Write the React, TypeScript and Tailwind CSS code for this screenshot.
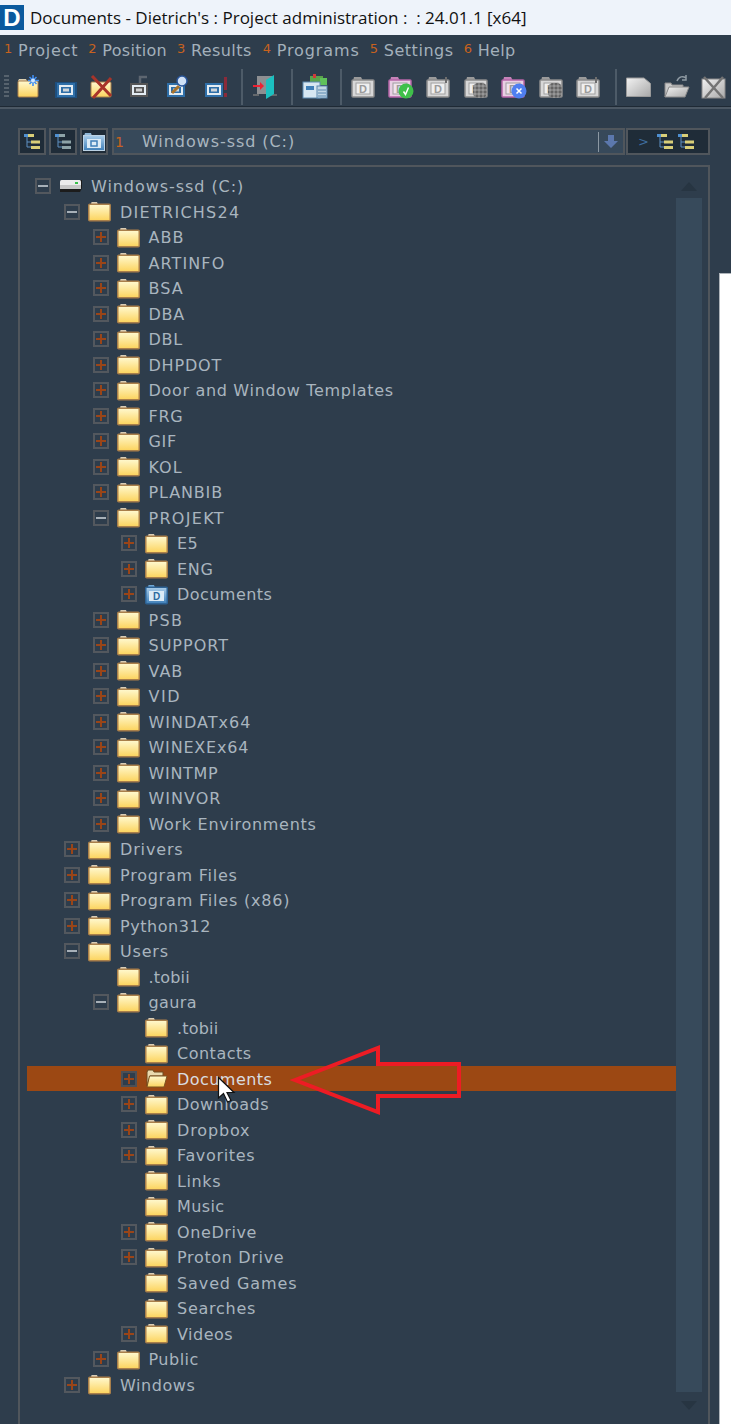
import React from "react";

const font = "[font-family:'DejaVu_Sans',sans-serif]";

type Row = { d: number; t: string; s: string; e?: "+" | "-"; k?: "drive" | "doc" | "open"; sel?: boolean };

const rows: Row[] = [
  { d: 0, t: "Windows-ssd (C:)", s: "tracking-[0.94px]", e: "-", k: "drive" },
  { d: 1, t: "DIETRICHS24", s: "tracking-[1.27px]", e: "-" },
  { d: 2, t: "ABB", s: "tracking-[1px]", e: "+" },
  { d: 2, t: "ARTINFO", s: "tracking-[1.1px]", e: "+" },
  { d: 2, t: "BSA", s: "tracking-[1px]", e: "+" },
  { d: 2, t: "DBA", s: "tracking-[0.7px]", e: "+" },
  { d: 2, t: "DBL", s: "tracking-[0.7px]", e: "+" },
  { d: 2, t: "DHPDOT", s: "tracking-[0.8px]", e: "+" },
  { d: 2, t: "Door and Window Templates", s: "tracking-[0.68px]", e: "+" },
  { d: 2, t: "FRG", s: "tracking-[0.7px]", e: "+" },
  { d: 2, t: "GIF", s: "tracking-[0.7px]", e: "+" },
  { d: 2, t: "KOL", s: "tracking-[1px]", e: "+" },
  { d: 2, t: "PLANBIB", s: "tracking-[0.85px]", e: "+" },
  { d: 2, t: "PROJEKT", s: "tracking-[1.3px]", e: "-" },
  { d: 3, t: "E5", s: "tracking-[0.3px]", e: "+" },
  { d: 3, t: "ENG", s: "tracking-[0.7px]", e: "+" },
  { d: 3, t: "Documents", s: "tracking-[0.45px]", e: "+", k: "doc" },
  { d: 2, t: "PSB", s: "tracking-[1.3px]", e: "+" },
  { d: 2, t: "SUPPORT", s: "tracking-[1px]", e: "+" },
  { d: 2, t: "VAB", s: "tracking-[1px]", e: "+" },
  { d: 2, t: "VID", s: "tracking-[1.5px]", e: "+" },
  { d: 2, t: "WINDATx64", s: "tracking-[1px]", e: "+" },
  { d: 2, t: "WINEXEx64", s: "tracking-[0.8px]", e: "+" },
  { d: 2, t: "WINTMP", s: "tracking-[0.7px]", e: "+" },
  { d: 2, t: "WINVOR", s: "tracking-[1px]", e: "+" },
  { d: 2, t: "Work Environments", s: "tracking-[0.7px]", e: "+" },
  { d: 1, t: "Drivers", s: "tracking-[0.85px]", e: "+" },
  { d: 1, t: "Program Files", s: "tracking-[0.77px]", e: "+" },
  { d: 1, t: "Program Files (x86)", s: "tracking-[0.8px]", e: "+" },
  { d: 1, t: "Python312", s: "tracking-[0.55px]", e: "+" },
  { d: 1, t: "Users", s: "tracking-[0.8px]", e: "-" },
  { d: 2, t: ".tobii", s: "tracking-[0.2px]" },
  { d: 2, t: "gaura", s: "tracking-[0.4px]", e: "-" },
  { d: 3, t: ".tobii", s: "tracking-[0.2px]" },
  { d: 3, t: "Contacts", s: "tracking-[0.5px]" },
  { d: 3, t: "Documents", s: "tracking-[0.45px]", e: "+", k: "open", sel: true },
  { d: 3, t: "Downloads", s: "tracking-[0.45px]", e: "+" },
  { d: 3, t: "Dropbox", s: "tracking-[0.85px]", e: "+" },
  { d: 3, t: "Favorites", s: "tracking-[0.66px]", e: "+" },
  { d: 3, t: "Links", s: "tracking-[0.6px]" },
  { d: 3, t: "Music", s: "tracking-[0.4px]" },
  { d: 3, t: "OneDrive", s: "tracking-[0.6px]", e: "+" },
  { d: 3, t: "Proton Drive", s: "tracking-[0.67px]", e: "+" },
  { d: 3, t: "Saved Games", s: "tracking-[0.9px]" },
  { d: 3, t: "Searches", s: "tracking-[0.75px]" },
  { d: 3, t: "Videos", s: "tracking-[0.5px]", e: "+" },
  { d: 2, t: "Public", s: "tracking-[0.5px]", e: "+" },
  { d: 1, t: "Windows", s: "tracking-[0.57px]", e: "+" },
];

const menu = [
  ["1", "Project", "ml-[4px]", "tracking-[0.8px]"],
  ["2", "Position", "ml-[10px]", "tracking-[0.3px]"],
  ["3", "Results", "ml-[10px]", "tracking-[0.4px]"],
  ["4", "Programs", "ml-[11px]", "tracking-[0.9px]"],
  ["5", "Settings", "ml-[10px]", "tracking-[0.55px]"],
  ["6", "Help", "ml-[10px]", "tracking-[0.3px]"],
];

function Gradients() {
  return (
    <svg width="0" height="0" className="absolute">
      <defs>
        <linearGradient id="fy" x1="0" y1="0" x2="0" y2="1">
          <stop offset="0" stopColor="#fff9d0" />
          <stop offset="1" stopColor="#fcd35c" />
        </linearGradient>
        <linearGradient id="fg" x1="0" y1="0" x2="1" y2="1">
          <stop offset="0" stopColor="#f2f2f2" />
          <stop offset="1" stopColor="#a9a9a9" />
        </linearGradient>
        <linearGradient id="fb" x1="0" y1="0" x2="0" y2="1">
          <stop offset="0" stopColor="#a9cdea" />
          <stop offset="1" stopColor="#3f7fb8" />
        </linearGradient>
        <pattern id="noise" width="4" height="4" patternUnits="userSpaceOnUse">
          <rect width="4" height="4" fill="#7d7d7d" />
          <rect width="2" height="2" fill="#5e5e5e" />
          <rect x="2" y="2" width="2" height="2" fill="#949494" />
        </pattern>
      </defs>
    </svg>
  );
}

function Folder() {
  return (
    <svg width="23" height="21" viewBox="0 0 23 21" className="shrink-0">
      <path d="M3 3.5 L3.5 1 H9 L10 3.5Z" fill="#d9cdb6" />
      <rect x="0.75" y="3.25" width="21.5" height="16.5" rx="1" fill="url(#fy)" stroke="#a97f4a" strokeWidth="1.5" />
    </svg>
  );
}

function OpenFolder() {
  return (
    <svg width="23" height="21" viewBox="0 0 23 21" className="shrink-0">
      <path d="M2 18 V4 L3 2 H8 L9 4 H18 V8 H5Z" fill="#e9d9ae" stroke="#6e4a1e" />
      <path d="M4.5 8 H22 L19 19 H2Z" fill="url(#fy)" stroke="#7d5420" />
    </svg>
  );
}

function DocFolder() {
  return (
    <svg width="23" height="21" viewBox="0 0 23 21" className="shrink-0">
      <path d="M3 3.5 L3.5 1 H9 L10 3.5Z" fill="#6fa6d4" />
      <rect x="0.75" y="3.25" width="21.5" height="16.5" rx="1" fill="url(#fb)" stroke="#2d6294" strokeWidth="1.5" />
      <rect x="4" y="7" width="15" height="10" fill="#dcebf6" />
      <text x="11.5" y="15.8" textAnchor="middle" fontSize="10" fontWeight="700" fill="#2d6a9f" fontFamily="Liberation Sans">D</text>
    </svg>
  );
}

function Drive() {
  return (
    <svg width="24" height="14" viewBox="0 0 24 14" className="shrink-0">
      <path d="M3 1 H23 V9 L21 13 H1 V5Z" fill="#1c1c1c" />
      <rect x="1" y="1" width="21" height="6" rx="1.5" fill="#ececec" />
      <rect x="1" y="6" width="21" height="4" fill="#c7c7c7" />
      <rect x="16" y="3" width="3" height="2" fill="#39c04a" />
    </svg>
  );
}

function Expander({ e, sel }: { e: "+" | "-"; sel?: boolean }) {
  return (
    <span className={`relative block h-[16px] w-[16px] shrink-0 border-2 ${sel ? "border-[#4c4f55] bg-[#2e3d4c]" : "border-[#53585e]"}`}>
      <span className={`absolute left-[1px] top-[5px] h-[2px] w-[10px] ${e === "+" ? "bg-[#9a4518]" : "bg-[#a7b0b8]"}`} />
      {e === "+" && <span className="absolute left-[5px] top-[1px] h-[10px] w-[2px] bg-[#9a4518]" />}
    </span>
  );
}

function TreeRow({ r }: { r: Row }) {
  const pad = ["pl-[8px]", "pl-[37px]", "pl-[65.5px]", "pl-[94px]"][r.d];
  return (
    <div className={`flex h-[25.5px] items-center ${pad} ${r.sel ? "bg-[#9c4813]" : ""}`}>
      <span className="flex w-[24px] shrink-0">{r.e && <Expander e={r.e} sel={r.sel} />}</span>
      {r.k === "drive" ? <Drive /> : r.k === "doc" ? <DocFolder /> : r.k === "open" ? <OpenFolder /> : <Folder />}
      <span className={`${r.k === "drive" ? "ml-[8px]" : "ml-[9px]"} whitespace-pre pt-[2px] text-[16px] leading-none ${r.s} ${r.sel ? "text-[#d9dde0]" : "text-[#a9b5bf]"} ${font}`}>
        {r.t}
      </span>
    </div>
  );
}

function TreeGlyph({ dim }: { dim?: boolean }) {
  const y = dim ? "#8ea4a8" : "#d9cf78";
  return (
    <svg width="16" height="16" viewBox="0 0 16 16">
      <path d="M3 3 V13 H7 M3 8 H7" stroke="#5f90c2" strokeWidth="1" fill="none" />
      <rect x="0" y="0" width="4" height="3" fill="#4f8fd0" />
      <rect x="4" y="0" width="6" height="3" fill={y} />
      <rect x="7" y="6.5" width="9" height="3" fill={y} />
      <rect x="7" y="12" width="9" height="3" fill={y} />
    </svg>
  );
}

function Frame({ s = "#cfd4d8", f = "#2f6fa8" }: { s?: string; f?: string }) {
  return (
    <>
      <rect x="3" y="8" width="18" height="14" fill={f} />
      <rect x="5" y="10" width="14" height="10" fill="#e4ecf2" />
      <rect x="7" y="12" width="10" height="6" fill={f} />
      <rect x="9" y="13.5" width="6" height="3" fill={s} />
    </>
  );
}

function GrayD({ pink, noise, badge, flag }: { pink?: boolean; noise?: boolean; badge?: "ok" | "x"; flag?: boolean }) {
  const tab = pink ? "#c583b8" : "#9a9a9a";
  const edge = pink ? "#b766a8" : "#8c8c8c";
  return (
    <svg width="26" height="24" viewBox="0 0 26 24">
      <path d="M2 6 L3 2 H10 L12 6Z" fill={tab} />
      <rect x="1" y="5" width="22" height="17" rx="1" fill={pink ? "#e9cfe4" : "#d8d8d8"} stroke={edge} strokeWidth="1.5" />
      <rect x="5" y="8" width="14" height="11" fill={pink ? "#f0e2ee" : "#efefef"} stroke="#a0a0a0" />
      <text x="12" y="17.5" textAnchor="middle" fontSize="11" fontWeight="700" fill="#9b9b9b" fontFamily="Liberation Sans">D</text>
      {flag && <path d="M20 2 V8" stroke="#6d6d6d" strokeWidth="2" />}
      {noise && <rect x="9" y="8" width="14" height="15" rx="5" fill="url(#noise)" opacity="0.95" />}
      {badge && <circle cx="18" cy="16" r="7.5" fill={badge === "ok" ? "#3fc04a" : "#4f7ff0"} />}
      {badge === "ok" && <path d="M15.5 16.5 L17.5 19.5 L20.5 12.5" stroke="#fff" strokeWidth="1.5" fill="none" />}
      {badge === "x" && <path d="M15.5 13.5 L20.5 18.5 M20.5 13.5 L15.5 18.5" stroke="#fff" strokeWidth="1.5" />}
    </svg>
  );
}

function Sep({ cls }: { cls: string }) {
  return <span className={`block h-[36px] w-[2px] shrink-0 bg-[#4d5b68] ${cls}`} />;
}

function Toolbar() {
  return (
    <div className="flex h-[37px] items-center pb-[2px]">
      <span className="ml-[4px] h-[24px] w-[5px] shrink-0 bg-[repeating-linear-gradient(to_bottom,#56626d_0px,#56626d_2px,transparent_2px,transparent_4px)]" />
      <svg className="ml-[8px] shrink-0" width="24" height="24" viewBox="0 0 24 24">
        <path d="M1 6 L2 4 H9 L10 6Z" fill="#ddd0b0" />
        <rect x="1" y="6" width="20" height="16" rx="1" fill="url(#fy)" stroke="#a97f4a" />
        <path d="M16 0 V11 M11 5.5 H22 M12.5 2 L19.5 9 M19.5 2 L12.5 9" stroke="#3f8df0" strokeWidth="1.6" />
        <circle cx="16" cy="5.5" r="2" fill="#cfe6ff" />
      </svg>
      <svg className="ml-[13px] shrink-0" width="24" height="24" viewBox="0 0 24 24"><rect x="1" y="7" width="22" height="16" fill="#1e4f7e" /><Frame /></svg>
      <svg className="ml-[11px] shrink-0" width="24" height="24" viewBox="0 0 24 24">
        <rect x="2" y="7" width="20" height="15" rx="1" fill="url(#fy)" stroke="#a97f4a" />
        <path d="M3 1 L22 21 M22 3 L4 23" stroke="#a8342a" strokeWidth="3" />
      </svg>
      <svg className="ml-[16px] shrink-0" width="20" height="24" viewBox="2 0 20 24">
        <Frame s="#cfcfcf" f="#555" />
        <path d="M13 8 V2 H20" stroke="#5d6670" strokeWidth="2.5" fill="none" />
      </svg>
      <svg className="ml-[17px] shrink-0" width="22" height="24" viewBox="2 0 22 24">
        <Frame />
        <path d="M8 18 L15 11" stroke="#a8732c" strokeWidth="3" />
        <circle cx="18" cy="6" r="5" fill="#cfe0f5" stroke="#29559a" strokeWidth="1.5" />
      </svg>
      <svg className="ml-[16px] shrink-0" width="24" height="24" viewBox="2 0 24 24">
        <Frame />
        <rect x="22" y="2" width="3" height="13" fill="#8a2a3a" />
        <rect x="22" y="18" width="3" height="4" fill="#8a2a3a" />
      </svg>
      <Sep cls="ml-[13px]" />
      <svg className="ml-[9px] shrink-0" width="26" height="26" viewBox="0 0 26 26">
        <path d="M5 2 H20 V20 H5Z" fill="#8d8f92" />
        <path d="M1 21 H7 M19 21 H25" stroke="#777" strokeWidth="1.5" />
        <path d="M14 6 L22 1 V20 L14 25Z" fill="#1cc0c0" />
        <path d="M1 12 H8" stroke="#ee2233" strokeWidth="2" />
        <path d="M8 8 L12 12 L8 16Z" fill="#ee2233" />
      </svg>
      <Sep cls="ml-[13px]" />
      <svg className="ml-[9px] shrink-0" width="26" height="25" viewBox="0 0 26 25">
        <rect x="8" y="2" width="13" height="7" fill="#5aa24a" />
        <rect x="11" y="0" width="3" height="4" fill="#d03a3a" />
        <rect x="18" y="4" width="7" height="7" fill="#5fc15a" />
        <rect x="1" y="8" width="17" height="16" fill="#d7e7f2" stroke="#5d8ab0" />
        <rect x="4" y="12" width="8" height="4" fill="#3f7fb8" />
        <rect x="15" y="12" width="10" height="12" fill="#c2d6e4" stroke="#5d8ab0" />
        <path d="M16 16 H24 M16 19 H24 M16 22 H24" stroke="#5d8ab0" />
      </svg>
      <Sep cls="ml-[12px]" />
      <span className="ml-[9px] shrink-0"><GrayD /></span>
      <span className="ml-[11px] shrink-0"><GrayD pink badge="ok" /></span>
      <span className="ml-[12px] shrink-0"><GrayD flag /></span>
      <span className="ml-[12px] shrink-0"><GrayD noise /></span>
      <span className="ml-[11px] shrink-0"><GrayD pink badge="x" /></span>
      <span className="ml-[12px] shrink-0"><GrayD noise /></span>
      <span className="ml-[11px] shrink-0"><GrayD flag /></span>
      <Sep cls="ml-[13px]" />
      <svg className="ml-[9px] shrink-0" width="25" height="20" viewBox="0 0 25 20">
        <path d="M0.5 1 H18 L24.5 6.5 V19.5 H0.5Z" fill="url(#fg)" stroke="#9a9a9a" />
      </svg>
      <svg className="ml-[13px] shrink-0" width="26" height="24" viewBox="0 0 26 24">
        <path d="M1 22 V8 H7 L8 10 H19 V13 H6Z" fill="#c8c8c8" stroke="#8a8a8a" />
        <path d="M5 12 H25 L21 22 H1Z" fill="url(#fg)" stroke="#8a8a8a" />
        <path d="M13 6 C15 1 19 1 22 3 M22 0 V5 H18" stroke="#8f9aa3" strokeWidth="1.5" fill="none" />
      </svg>
      <svg className="ml-[11px] shrink-0" width="25" height="24" viewBox="0 0 25 24">
        <rect x="1" y="4" width="23" height="19" fill="url(#fg)" stroke="#8a8a8a" />
        <path d="M3 2 L22 23 M22 2 L4 23" stroke="#747474" strokeWidth="2.5" />
      </svg>
    </div>
  );
}

export default function App() {
  return (
    <div className="relative flex h-[1424px] w-[731px] flex-col overflow-hidden bg-[#2e3d4c]">
      <Gradients />
      <div className="flex h-[35px] shrink-0 items-center bg-[#eef3fa]">
        <span className="flex h-[25px] w-[24px] items-center justify-center bg-[#0b5a9e]">
          <span className="text-[24px] font-bold leading-none text-white [font-family:'Liberation_Sans',sans-serif]">D</span>
        </span>
        <span className="ml-[6px] whitespace-pre text-[17px] text-[#111] [font-family:'Open_Sans',sans-serif]">
          Documents - Dietrich's : Project administration :  : 24.01.1 [x64]
        </span>
      </div>

      <div className="flex h-[34px] shrink-0 items-center pb-[3px]">
        {menu.map(([n, t, m, s]) => (
          <span key={n} className={`flex items-center ${m} ${font}`}>
            <span className="mb-[5px] w-[8px] text-[13px] leading-none text-[#c8621e]">{n}</span>
            <span className={`ml-[6px] whitespace-pre text-[16px] leading-none text-[#a3b0bb] ${s}`}>{t}</span>
          </span>
        ))}
      </div>

      <Toolbar />
      <div className="h-[1px] shrink-0 bg-[#1f2a35]" />
      <div className="h-[2px] shrink-0 bg-[#4c5864]" />

      <div className="flex min-h-0 flex-1">
        <div className="flex w-[719px] shrink-0 flex-col">
          <div className="ml-[18px] mt-[19px] flex h-[27px] w-[692px] shrink-0">
            {[<TreeGlyph key="a" />, <TreeGlyph key="b" dim />].map((g, i) => (
              <span key={i} className={`flex h-[27px] w-[28px] items-center justify-center border-2 border-[#50565c] bg-[#1f2c38] ${i ? "ml-[3px]" : ""}`}>{g}</span>
            ))}
            <span className="ml-[3px] flex h-[27px] w-[28px] items-center justify-center border-2 border-[#50565c] bg-[#1f2c38]">
              <svg width="22" height="19" viewBox="0 0 22 19">
                <path d="M1 4 L2 1 H8 L9 4Z" fill="#8fb6d6" />
                <rect x="0.5" y="3.5" width="21" height="15" fill="url(#fb)" stroke="#bcd2e4" />
                <rect x="4" y="7" width="14" height="9" fill="#dcebf6" />
                <rect x="8" y="9" width="6" height="5" fill="none" stroke="#3f7fb8" strokeWidth="1.5" />
              </svg>
            </span>
            <div className={`ml-[4px] flex h-[27px] w-[513px] items-center border-2 border-[#50565c] bg-[#37495a] ${font}`}>
              <span className="ml-[1px] text-[14px] leading-none text-[#c8621e]">1</span>
              <span className="ml-[18px] whitespace-pre text-[16px] leading-none tracking-[0.94px] text-[#a9b5bf]">Windows-ssd (C:)</span>
              <span className="ml-auto h-[20px] w-[1px] bg-[#8b98a3]" />
              <svg className="ml-[5px] mr-[5px]" width="14" height="13" viewBox="0 0 14 13"><path d="M4 0 H10 V6 H14 L7 13 L0 6 H4Z" fill="#5c78ad" /></svg>
            </div>
            <div className="ml-[1px] flex h-[27px] flex-1 items-center border-2 border-[#50565c] bg-[#1f2c38] pl-[10px]">
              <span className={`text-[13px] leading-none text-[#3e6c9f] ${font}`}>&gt;</span>
              <span className="ml-[8px] flex gap-[5px]"><TreeGlyph /><TreeGlyph /></span>
            </div>
          </div>

          <div className="ml-[18px] mt-[10px] flex min-h-0 w-[692px] flex-1 border-l-2 border-r-2 border-t-2 border-[#50565c] pl-[7px] pr-[6px]">
            <div className="min-w-0 flex-1 pt-[6.25px]">
              {rows.map((r, i) => <TreeRow key={i} r={r} />)}
            </div>
            <div className="flex w-[26px] shrink-0 flex-col items-center">
              <span className="mt-[15px] h-0 w-0 border-x-[8px] border-b-[9px] border-x-transparent border-b-[#273542]" />
              <span className="mt-[7px] h-[1194px] w-full bg-[#374a5b]" />
              <span className="mt-[9px] h-0 w-0 border-x-[8px] border-t-[9px] border-x-transparent border-t-[#273542]" />
            </div>
          </div>
        </div>
        <div className="min-w-0 flex-1 pt-[164px]">
          <div className="h-full border-l border-t border-[#aeb4ba] bg-white" />
        </div>
      </div>

      <svg className="absolute left-[290px] top-[1042px]" width="176" height="76" viewBox="290 1042 176 76">
        <path d="M295 1080 L378 1048 V1064 H459 V1096 H378 V1112Z" fill="none" stroke="#ed1c24" strokeWidth="4" />
      </svg>
      <svg className="absolute left-[217px] top-[1076px]" width="20" height="28" viewBox="0 0 20 28">
        <path d="M1.5 1.5 V22 L6.5 17.5 L10.5 26 L14 24.5 L10 16.5 H17Z" fill="#fff" stroke="#111" strokeWidth="1.2" />
      </svg>
    </div>
  );
}
